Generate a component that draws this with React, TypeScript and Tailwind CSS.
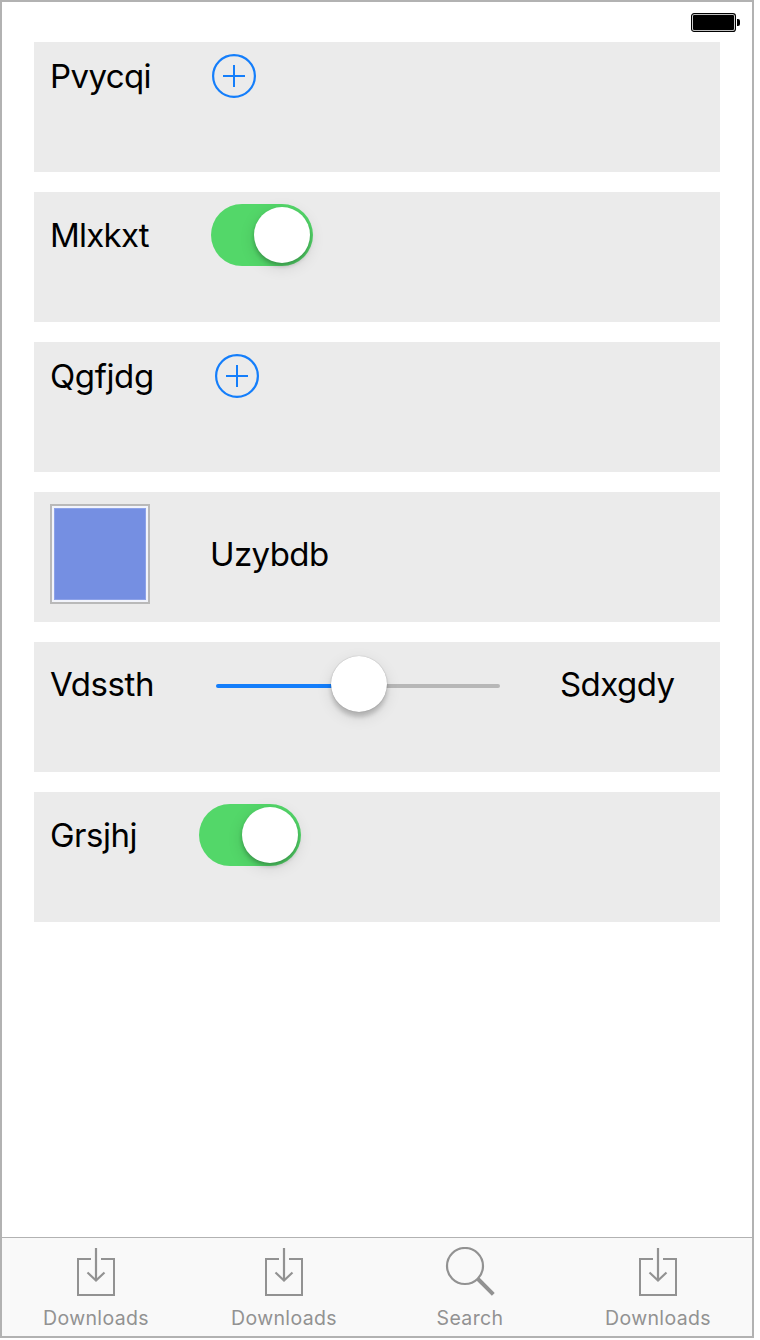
import type { ReactNode } from "react";

function Panel({ children }: { children: ReactNode }) {
  return <section className="flex h-[130px] items-start bg-[#ebebeb] pt-3 pl-4">{children}</section>;
}

function Label({ children, className }: { children: string; className: string }) {
  return <span className={`shrink-0 whitespace-nowrap text-[33px] leading-[44px] ${className}`}>{children}</span>;
}

function AddButton() {
  return (
    <button aria-label="Add" className="size-11">
      <svg viewBox="0 0 44 44" className="size-11" fill="none" stroke="#147efb" strokeWidth="2">
        <circle cx="22" cy="22" r="20.9" strokeWidth="2.2" />
        <path d="M22 11v22M11 22h22" />
      </svg>
    </button>
  );
}

function Toggle() {
  return (
    <button
      role="switch"
      aria-checked="true"
      aria-label="Toggle"
      className="flex h-[62px] w-[102px] items-center justify-end rounded-full bg-[#53d769] pr-[3px]"
    >
      <span className="size-14 rounded-full bg-white shadow-[0_3px_4px_rgba(0,0,0,0.24),0_4px_16px_rgba(0,0,0,0.12)]" />
    </button>
  );
}

function Slider() {
  return (
    <div className="mt-0.5 flex h-[60px] w-[284px] items-center">
      <div className="h-1 w-[116px] rounded-l-full bg-[#147efb]" />
      <div className="z-10 -mx-px mb-1 size-14 shrink-0 rounded-full bg-white shadow-[0_0_1px_rgba(0,0,0,0.35),0_5px_4px_rgba(0,0,0,0.18),0_5px_16px_rgba(0,0,0,0.11)]" />
      <div className="h-1 flex-1 rounded-r-full bg-[#b7b7b7]" />
    </div>
  );
}

function DownloadIcon() {
  return (
    <svg viewBox="0 0 50 50" className="size-[50px]" fill="none" stroke="#929292" strokeWidth="2">
      <path d="M20 12H7v36h36V12H30" />
      <path d="M25 1v33M16.5 25.5l8.5 8 8.5-8" strokeWidth="2.2" />
    </svg>
  );
}

function SearchIcon() {
  return (
    <svg viewBox="0 0 50 50" className="size-[50px]" fill="none" stroke="#929292" strokeWidth="2.2">
      <circle cx="20" cy="19" r="18" />
      <path d="M33 32l15.3 15.3" strokeWidth="4" />
    </svg>
  );
}

function Tab({ label, search = false }: { label: string; search?: boolean }) {
  return (
    <a className={`flex flex-col items-center pt-[9px] text-[#929292] ${search ? "mr-0.5 w-[184px]" : "w-[188px]"}`}>
      {search ? <SearchIcon /> : <DownloadIcon />}
      <span className="mt-[9px] text-[19.5px] leading-6 tracking-[0.35px]">{label}</span>
    </a>
  );
}

export default function App() {
  return (
    <div className="h-[1340px] bg-white font-['Inter',sans-serif] text-black">
      <div className="flex h-[1338px] w-[754px] flex-col border-2 border-[#b2b2b2] bg-white">
        <header className="flex h-10 justify-end pt-[11px] pr-3">
          <svg viewBox="0 0 49 19" className="h-[19px] w-[49px]">
            <rect x=".6" y=".6" width="43.8" height="17.8" rx="2.5" fill="none" stroke="#000" strokeWidth="1.2" />
            <rect x="2" y="2" width="41" height="15" rx="1" />
            <path d="M46 6h1a2 2 0 0 1 2 2v3a2 2 0 0 1-2 2h-1z" />
          </svg>
        </header>
        <main className="flex flex-1 flex-col gap-5 px-8">
          <Panel>
            <Label className="w-[162px] tracking-[-0.6px]">Pvycqi</Label>
            <AddButton />
          </Panel>
          <Panel>
            <Label className="mt-[9px] w-[161px] tracking-[-0.75px]">Mlxkxt</Label>
            <Toggle />
          </Panel>
          <Panel>
            <Label className="w-[165px] tracking-[-0.4px]">Qgfjdg</Label>
            <AddButton />
          </Panel>
          <Panel>
            <div className="mr-[60px] size-[100px] border-2 border-[#b9b9b9] bg-[#f2f4fb] p-[2px]">
              <div className="size-full border border-[#8da2e8] bg-[#758fe2]" />
            </div>
            <Label className="mt-7 tracking-[-0.6px]">Uzybdb</Label>
          </Panel>
          <Panel>
            <Label className="mt-2 w-[166px] tracking-[-0.4px]">Vdssth</Label>
            <Slider />
            <Label className="mt-2 ml-[60px] tracking-[-0.55px]">Sdxgdy</Label>
          </Panel>
          <Panel>
            <Label className="mt-[9px] w-[149px] tracking-[-0.5px]">Grsjhj</Label>
            <Toggle />
          </Panel>
        </main>
        <nav className="flex h-[99px] border-t border-[#b2b2b2] bg-[#f9f9f9]">
          <Tab label="Downloads" />
          <Tab label="Downloads" />
          <Tab label="Search" search />
          <Tab label="Downloads" />
        </nav>
      </div>
    </div>
  );
}
